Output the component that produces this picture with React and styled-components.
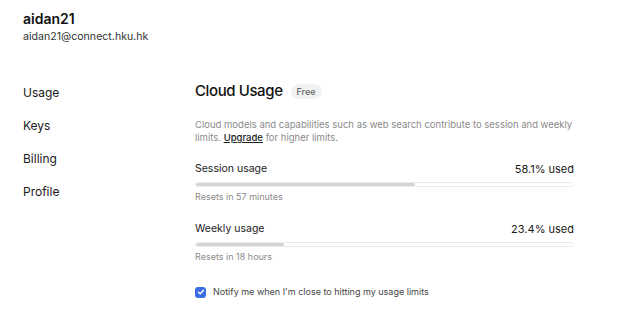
import React from "react";
import styled, { createGlobalStyle } from "styled-components";

const Global = createGlobalStyle`
  html, body { margin: 0; padding: 0; background: #fff; }
  body { font-family: Inter, "Helvetica Neue", Arial, sans-serif; color: #1a1a1a; -webkit-font-smoothing: antialiased; }
`;

const Page = styled.div`
  width: 624px;
  height: 317px;
  overflow: hidden;
`;

const Header = styled.header`
  padding: 10px 0 0 23px;
`;

const Name = styled.div`
  font-size: 14px;
  line-height: 18px;
  font-weight: 600;
  color: #111;
`;

const Email = styled.div`
  font-size: 10.6px;
  line-height: 16px;
  margin-top: 1px;
  color: #333;
`;

const Body = styled.div`
  display: flex;
  margin-top: 35px;
`;

const Sidebar = styled.nav`
  width: 195px;
  padding-left: 23px;
  box-sizing: border-box;
  padding-top: 4px;
  display: flex;
  flex-direction: column;
  gap: 15px;
`;

const NavItem = styled.div`
  font-size: 12px;
  line-height: 18px;
  color: #1a1a1a;
`;

const Main = styled.main`
  width: 379px;
`;

const TitleRow = styled.div`
  display: flex;
  align-items: center;
  gap: 8px;
  height: 22px;
`;

const Title = styled.h1`
  margin: 0;
  font-size: 15px;
  font-weight: 500;
  line-height: 22px;
  color: #111;
  letter-spacing: -0.4px;
`;

const Badge = styled.span`
  font-size: 9px;
  line-height: 15px;
  padding: 0 6px;
  border-radius: 8px;
  background: #f2f2f2;
  color: #666;
  font-weight: 500;
`;

const Desc = styled.p`
  margin: 16px 0 0;
  font-size: 9.5px;
  line-height: 13px;
  color: #8a8a8a;
`;

const UpgradeLink = styled.a`
  color: #222;
  text-decoration: underline;
  font-weight: 500;
`;

const Meter = styled.section`
  margin-top: ${(p) => p.$top}px;
`;

const MeterHead = styled.div`
  display: flex;
  justify-content: space-between;
  font-size: 10.5px;
  line-height: 14px;
  color: #1a1a1a;
`;

const Pct = styled.span`
  font-size: 11px;
`;

const Track = styled.div`
  margin-top: 6px;
  height: 5px;
  border-radius: 3px;
  border: 1px solid #ececec;
  box-sizing: border-box;
  background: #fff;
  overflow: hidden;
`;

const Fill = styled.div`
  height: 100%;
  background: #d4d4d4;
  border-radius: 3px;
`;

const Resets = styled.div`
  margin-top: 4px;
  font-size: 9px;
  line-height: 12px;
  color: #8a8a8a;
`;

const Notify = styled.label`
  margin-top: 22px;
  display: flex;
  align-items: center;
  gap: 7px;
  font-size: 9px;
  line-height: 14px;
  color: #444;
`;

const Box = styled.span`
  width: 11px;
  height: 11px;
  border-radius: 3px;
  background: #3b6ee6;
  display: inline-flex;
  align-items: center;
  justify-content: center;
`;

function Usage({ label, pct, resets, top }) {
  return (
    <Meter $top={top}>
      <MeterHead>
        <span>{label}</span>
        <Pct>{pct}% used</Pct>
      </MeterHead>
      <Track>
        <Fill style={{ width: `${pct}%` }} />
      </Track>
      <Resets>{resets}</Resets>
    </Meter>
  );
}

export default function App() {
  return (
    <Page>
      <Global />
      <Header>
        <Name>aidan21</Name>
        <Email>aidan21@connect.hku.hk</Email>
      </Header>
      <Body>
        <Sidebar>
          <NavItem>Usage</NavItem>
          <NavItem>Keys</NavItem>
          <NavItem>Billing</NavItem>
          <NavItem>Profile</NavItem>
        </Sidebar>
        <Main>
          <TitleRow>
            <Title>Cloud Usage</Title>
            <Badge>Free</Badge>
          </TitleRow>
          <Desc>
            Cloud models and capabilities such as web search contribute to session and weekly
            limits. <UpgradeLink>Upgrade</UpgradeLink> for higher limits.
          </Desc>
          <Usage label="Session usage" pct={58.1} resets="Resets in 57 minutes" top={18} />
          <Usage label="Weekly usage" pct={23.4} resets="Resets in 18 hours" top={19} />
          <Notify>
            <Box>
              <svg width="8" height="8" viewBox="0 0 8 8">
                <path d="M1.5 4.2 L3.2 5.8 L6.5 2.2" fill="none" stroke="#fff" strokeWidth="1.4" strokeLinecap="round" strokeLinejoin="round" />
              </svg>
            </Box>
            Notify me when I'm close to hitting my usage limits
          </Notify>
        </Main>
      </Body>
    </Page>
  );
}
